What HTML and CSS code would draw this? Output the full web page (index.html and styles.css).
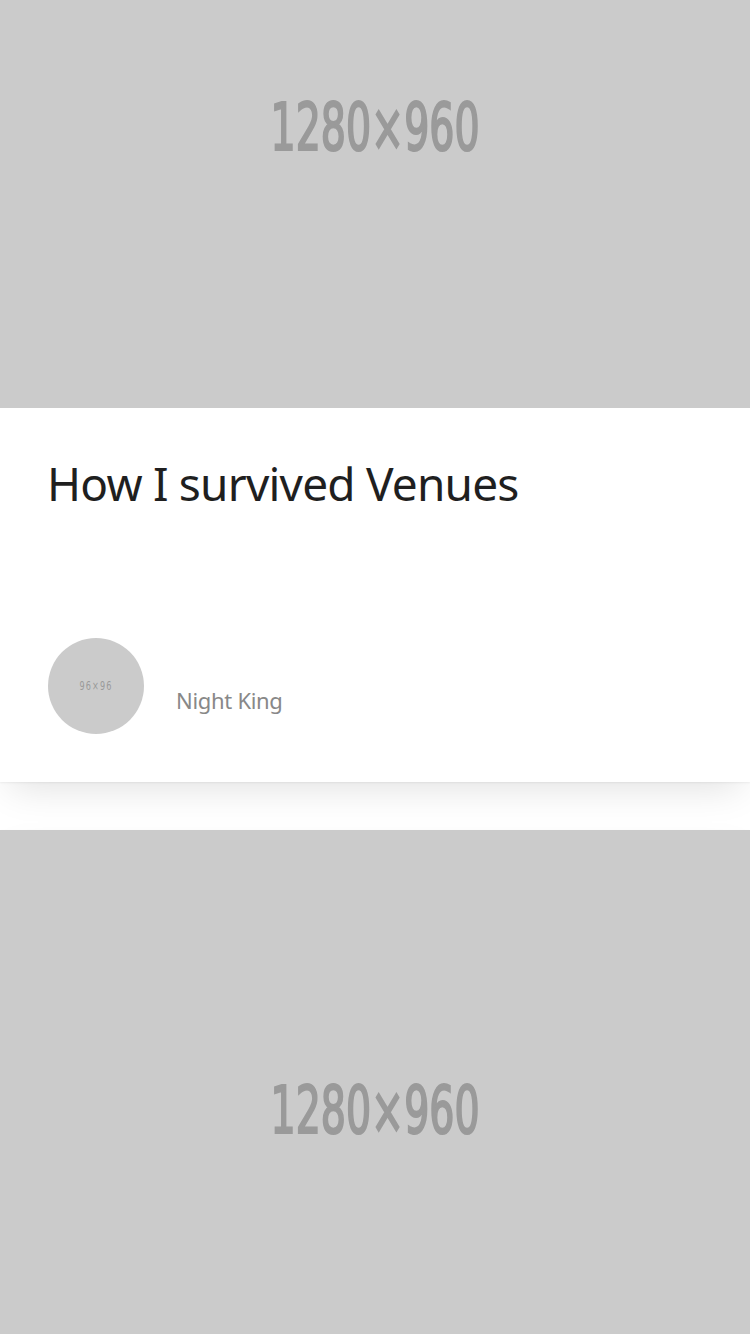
FILE: index.html
```html
<!DOCTYPE html>
<html lang="en">
<head>
<meta charset="utf-8">
<title>Feed</title>
<link rel="stylesheet" href="styles.css">
</head>
<body>
<main class="feed">
  <article class="card">
    <div class="media media-top">
      <span class="ph-text">1280×960</span>
    </div>
    <div class="card-body">
      <h2 class="title">How I survived Venues</h2>
      <div class="author">
        <div class="avatar"><span class="avatar-text">96×96</span></div>
        <span class="author-name">Night King</span>
      </div>
    </div>
  </article>
  <article class="card">
    <div class="media media-full">
      <span class="ph-text">1280×960</span>
    </div>
  </article>
</main>
</body>
</html>
```
FILE: styles.css
```css
html, body {
  margin: 0;
  padding: 0;
  background: #ffffff;
}

body {
  font-family: "Noto Sans", "Open Sans", sans-serif;
  overflow: hidden;
}

.feed {
  display: flex;
  flex-direction: column;
  gap: 48px;
}

.card {
  background: #ffffff;
  box-shadow: 0 1px 2px rgba(0, 0, 0, 0.06), 0 16px 36px -10px rgba(0, 0, 0, 0.12);
}

.media {
  background: #cbcbcb;
  display: flex;
  justify-content: center;
  align-items: flex-start;
  box-sizing: border-box;
}

.media-top {
  height: 408px;
  padding-top: 95px;
}

.media-full {
  height: 562px;
  padding-top: 248px;
}

.ph-text {
  display: inline-block;
  font-family: "DejaVu Sans", sans-serif;
  font-stretch: condensed;
  font-weight: 400;
  font-size: 66px;
  line-height: 66px;
  color: #9a9a9a;
  -webkit-text-stroke: 2.2px #9a9a9a;
  transform: scaleX(0.665);
  white-space: nowrap;
}

.card-body {
  padding: 48px;
}

.title {
  margin: 0 0 0 -1px;
  font-size: 46px;
  line-height: 55px;
  font-weight: 400;
  letter-spacing: -0.8px;
  color: #1f1f1f;
}

.author {
  margin-top: 127px;
  display: flex;
  align-items: flex-end;
  gap: 32px;
}

.avatar {
  width: 96px;
  height: 96px;
  border-radius: 50%;
  background: #cbcbcb;
  display: flex;
  align-items: center;
  justify-content: center;
  flex-shrink: 0;
}

.avatar-text {
  display: inline-block;
  font-family: "DejaVu Sans", sans-serif;
  font-stretch: condensed;
  font-size: 12px;
  line-height: 12px;
  letter-spacing: 1.5px;
  color: #9a9a9a;
  transform: scaleX(0.75);
}

.author-name {
  font-size: 22px;
  line-height: 32px;
  color: #888888;
  letter-spacing: -0.3px;
  padding-bottom: 18px;
}
```
